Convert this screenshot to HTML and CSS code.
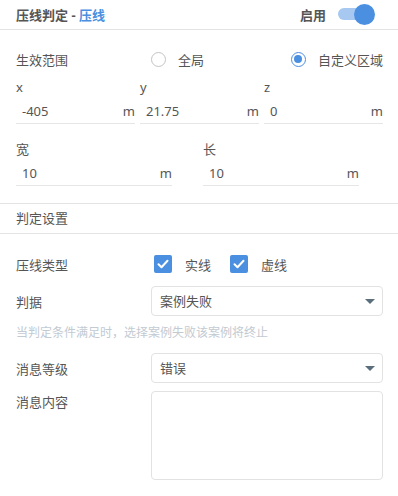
FILE: index.html
```html
<!DOCTYPE html>
<html lang="zh-CN">
<head>
  <meta charset="UTF-8" />
  <meta name="viewport" content="width=device-width, initial-scale=1.0"/>
  <title>压线判定</title>
  <link rel="stylesheet" href="styles.css">
</head>
<body>
  <div class="panel">
    <!-- Header -->
    <div class="panel-header">
      <div class="panel-title">压线判定 - <span class="accent">压线</span></div>
      <div class="enable">
        <span>启用</span>
        <div class="switch on"><div class="switch-track"></div><div class="switch-knob"></div></div>
      </div>
    </div>

    <!-- Scope -->
    <div class="form-row range-row">
      <div class="row-label">生效范围</div>
      <div class="radio-group">
        <label class="radio"><span class="radio-dot"></span>全局</label>
        <label class="radio checked"><span class="radio-dot"></span>自定义区域</label>
      </div>
    </div>

    <div class="field-grid three">
      <div class="field">
        <div class="field-label">x</div>
        <div class="unit-input"><span class="value">-405</span><span class="unit">m</span></div>
      </div>
      <div class="field">
        <div class="field-label">y</div>
        <div class="unit-input"><span class="value">21.75</span><span class="unit">m</span></div>
      </div>
      <div class="field">
        <div class="field-label">z</div>
        <div class="unit-input"><span class="value">0</span><span class="unit">m</span></div>
      </div>
    </div>

    <div class="field-grid two">
      <div class="field">
        <div class="field-label">宽</div>
        <div class="unit-input"><span class="value">10</span><span class="unit">m</span></div>
      </div>
      <div class="field">
        <div class="field-label">长</div>
        <div class="unit-input"><span class="value">10</span><span class="unit">m</span></div>
      </div>
    </div>

    <!-- Judge settings -->
    <div class="section-title">判定设置</div>

    <div class="form-row check-row">
      <div class="row-label">压线类型</div>
      <div class="check-group">
        <label class="checkbox">
          <span class="check-box"><svg viewBox="0 0 18 18" width="18" height="18"><path d="M4.5 9.2l3 3 6-6.4" fill="none" stroke="#fff" stroke-width="2" stroke-linecap="round" stroke-linejoin="round"/></svg></span>
          实线
        </label>
        <label class="checkbox">
          <span class="check-box"><svg viewBox="0 0 18 18" width="18" height="18"><path d="M4.5 9.2l3 3 6-6.4" fill="none" stroke="#fff" stroke-width="2" stroke-linecap="round" stroke-linejoin="round"/></svg></span>
          虚线
        </label>
      </div>
    </div>

    <div class="form-row select-row">
      <div class="row-label">判据</div>
      <div class="select">案例失败<span class="caret"></span></div>
    </div>

    <div class="hint">当判定条件满足时，选择案例失败该案例将终止</div>

    <div class="form-row select-row">
      <div class="row-label">消息等级</div>
      <div class="select">错误<span class="caret"></span></div>
    </div>

    <div class="form-row text-row">
      <div class="row-label">消息内容</div>
      <div class="textarea"></div>
    </div>
  </div>
</body>
</html>
```

FILE: styles.css
```css
body {
  margin: 0;
  background: #fff;
  font-family: "Noto Sans", "Noto Sans CJK SC", sans-serif;
  font-size: 13px;
  color: #555;
}

.panel {
  width: 398px;
}

.panel-header {
  display: flex;
  justify-content: space-between;
  align-items: center;
  height: 29px;
  padding: 0 23px 0 16px;
  border-bottom: 1px solid #e3e3e3;
  font-weight: bold;
}

.panel-title .accent {
  color: #4a8fe0;
}

.enable {
  display: flex;
  align-items: center;
  gap: 12px;
}

.switch {
  position: relative;
  width: 37px;
  height: 21px;
}

.switch-track {
  position: absolute;
  left: 0;
  top: 4px;
  width: 28px;
  height: 12px;
  border-radius: 6px;
  background: #a6c8f1;
}

.switch-knob {
  position: absolute;
  right: 0;
  top: 0;
  width: 21px;
  height: 21px;
  border-radius: 50%;
  background: #4a8fe0;
}

.form-row {
  display: flex;
  align-items: center;
  padding: 0 15px 0 16px;
}

.row-label {
  width: 135px;
  flex-shrink: 0;
}

.range-row {
  height: 28px;
  margin-top: 15px;
}

.radio-group {
  flex: 1;
  display: flex;
  justify-content: space-between;
}

.radio {
  display: flex;
  align-items: center;
  gap: 12px;
}

.radio-dot {
  width: 13px;
  height: 13px;
  border: 1.5px solid #c4c4c4;
  border-radius: 50%;
  display: flex;
  align-items: center;
  justify-content: center;
}

.radio.checked .radio-dot {
  border-color: #4a8fe0;
}

.radio.checked .radio-dot::after {
  content: "";
  width: 8px;
  height: 8px;
  border-radius: 50%;
  background: #4a8fe0;
}

.field-grid {
  display: flex;
  padding: 0 15px 0 16px;
}

.field-grid.three {
  gap: 5px;
  margin-top: 5px;
}

.field-grid.two {
  gap: 31px;
  margin-top: 16px;
}

.field-grid.three .field {
  width: 119px;
}

.field-grid.two .field {
  width: 156px;
}

.field-label {
  height: 18px;
  line-height: 18px;
}

.unit-input {
  display: flex;
  justify-content: space-between;
  align-items: center;
  box-sizing: border-box;
  height: 28px;
  padding: 3px 0 0 6px;
  border-bottom: 1px solid #e6e6e6;
}

.section-title {
  margin-top: 17px;
  height: 29px;
  line-height: 29px;
  padding-left: 16px;
  border-top: 1px solid #e3e3e3;
  border-bottom: 1px solid #e3e3e3;
}

.check-row {
  height: 30px;
  margin-top: 15px;
}

.check-group {
  display: flex;
  gap: 19px;
  margin-left: 3px;
}

.checkbox {
  display: flex;
  align-items: center;
  gap: 13px;
}

.check-box {
  width: 18px;
  height: 18px;
  border-radius: 2px;
  background: #4a8fe0;
}

.check-box svg {
  display: block;
}

.select-row {
  margin-top: 7px;
}

.select {
  flex: 1;
  position: relative;
  height: 28px;
  line-height: 28px;
  padding-left: 8px;
  border: 1px solid #e2e2e2;
  border-radius: 4px;
}

.caret {
  position: absolute;
  right: 7px;
  top: 12px;
  border-left: 5px solid transparent;
  border-right: 5px solid transparent;
  border-top: 5px solid #5b6e7d;
}

.hint {
  height: 27px;
  line-height: 27px;
  margin-top: 3px;
  padding-left: 16px;
  font-size: 12px;
  color: #c2cad2;
}

.text-row {
  align-items: flex-start;
  margin-top: 8px;
}

.text-row .row-label {
  margin-top: 1px;
}

.textarea {
  flex: 1;
  height: 87px;
  border: 1px solid #e2e2e2;
  border-radius: 4px;
}
```
